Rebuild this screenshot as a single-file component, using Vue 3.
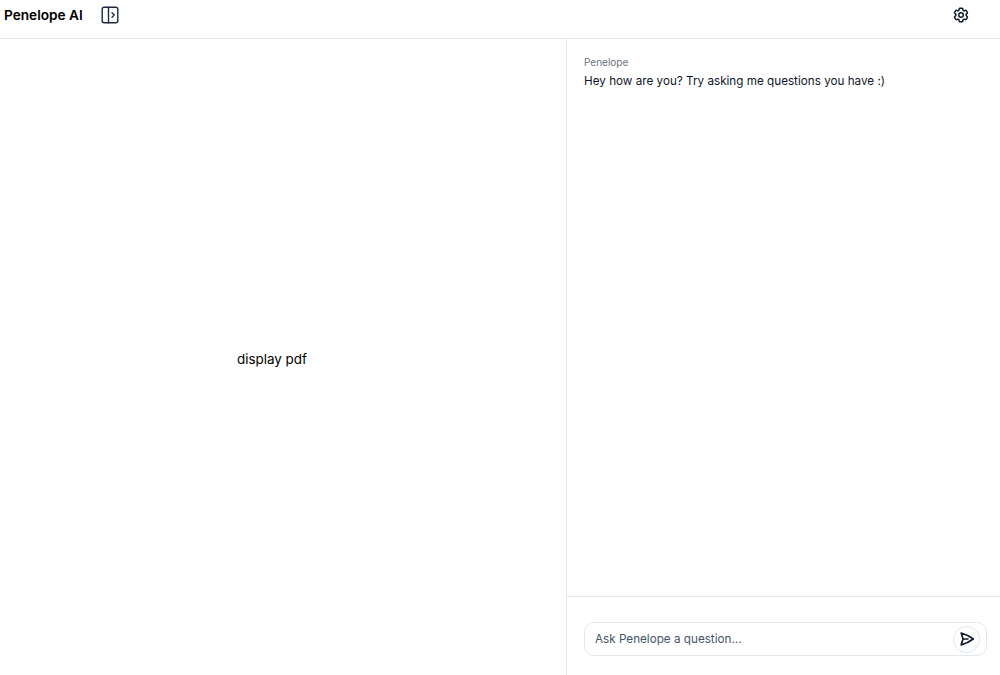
<template>
  <div class="page">
    <header class="topbar">
      <div class="brand">
        <span class="title">Penelope AI</span>
        <button class="icon-btn panel-btn">
          <svg width="20" height="20" viewBox="0 0 20 20" fill="none" stroke="#1e293b" stroke-width="1.4" stroke-linecap="round" stroke-linejoin="round">
            <rect x="2.2" y="2.2" width="15.6" height="15.6" rx="2" />
            <path d="M8.5 2.2v15.6" />
            <path d="M12 7.8 14.2 10 12 12.2" />
          </svg>
        </button>
      </div>
      <button class="icon-btn gear-btn">
        <svg width="18" height="18" viewBox="0 0 24 24" fill="none" stroke="#0f172a" stroke-width="2" stroke-linecap="round" stroke-linejoin="round">
          <path d="M9.594 3.94c.09-.542.56-.94 1.11-.94h2.593c.55 0 1.02.398 1.11.94l.213 1.281c.063.374.313.686.645.87.074.04.147.083.22.127.325.196.72.257 1.075.124l1.217-.456a1.125 1.125 0 0 1 1.37.49l1.296 2.247a1.125 1.125 0 0 1-.26 1.431l-1.003.827c-.293.241-.438.613-.43.992a7.723 7.723 0 0 1 0 .255c-.008.378.137.75.43.991l1.004.827c.424.35.534.955.26 1.43l-1.298 2.247a1.125 1.125 0 0 1-1.369.491l-1.217-.456c-.355-.133-.75-.072-1.076.124a6.47 6.47 0 0 1-.22.128c-.331.183-.581.495-.644.869l-.213 1.281c-.09.543-.56.94-1.11.94h-2.594c-.55 0-1.019-.398-1.11-.94l-.213-1.281c-.062-.374-.312-.686-.644-.87a6.52 6.52 0 0 1-.22-.127c-.325-.196-.72-.257-1.076-.124l-1.217.456a1.125 1.125 0 0 1-1.369-.49l-1.297-2.247a1.125 1.125 0 0 1 .26-1.431l1.004-.827c.292-.24.437-.613.43-.991a6.932 6.932 0 0 1 0-.255c.007-.38-.138-.751-.43-.992l-1.004-.827a1.125 1.125 0 0 1-.26-1.43l1.297-2.247a1.125 1.125 0 0 1 1.37-.491l1.216.456c.356.133.751.072 1.076-.124.072-.044.146-.086.22-.128.332-.183.582-.495.644-.869l.214-1.28Z" />
          <circle cx="12" cy="12" r="3" />
        </svg>
      </button>
    </header>
    <main class="content">
      <section class="pdf-pane">display pdf</section>
      <section class="chat-pane">
        <div class="messages">
          <div class="sender">Penelope</div>
          <div class="message">{{ greeting }}</div>
        </div>
        <div class="composer">
          <div class="input-box">
            <span class="placeholder">Ask Penelope a question...</span>
            <button class="send-btn">
              <svg width="16" height="16" viewBox="0 0 24 24" fill="none" stroke="#0f172a" stroke-width="2.4" stroke-linecap="round" stroke-linejoin="round">
                <path d="M6 12 3.269 3.125A59.769 59.769 0 0 1 21.485 12 59.768 59.768 0 0 1 3.27 20.875L5.999 12Zm0 0h7.5" />
              </svg>
            </button>
          </div>
        </div>
      </section>
    </main>
  </div>
</template>

<script setup>
const greeting = 'Hey how are you? Try asking me questions you have :)'
</script>

<style>
body {
  margin: 0;
  background: #fff;
}
</style>

<style scoped>
.page {
  width: 1000px;
  height: 675px;
  display: flex;
  flex-direction: column;
  font-family: Inter, "Liberation Sans", sans-serif;
  color: #0f172a;
  overflow: hidden;
}
.topbar {
  height: 30px;
  flex: none;
  display: flex;
  align-items: center;
  justify-content: space-between;
  border-bottom: 1px solid #e2e8f0;
  padding: 0 30.5px 8px 4px;
}
.brand {
  display: flex;
  align-items: center;
  gap: 17px;
}
.title {
  font-size: 13.65px;
  font-weight: 600;
  color: #000;
}
.icon-btn {
  border: 0;
  background: none;
  padding: 0;
  display: flex;
}
.content {
  flex: 1;
  display: flex;
  min-height: 0;
}
.pdf-pane {
  width: 566px;
  flex: none;
  display: flex;
  align-items: center;
  justify-content: center;
  font-size: 13.4px;
  color: #000;
  padding-top: 4px;
  padding-right: 22px;
  box-sizing: border-box;
}
.chat-pane {
  flex: 1;
  display: flex;
  flex-direction: column;
  border-left: 1px solid #e2e8f0;
  min-width: 0;
}
.messages {
  flex: 1;
  padding: 15px 17px;
}
.sender {
  font-size: 10px;
  line-height: 16px;
  color: #6b7280;
}
.message {
  font-size: 11.7px;
  line-height: 20px;
  margin-top: 1px;
  color: #0f172a;
}
.composer {
  height: 79px;
  flex: none;
  border-top: 1px solid #e2e8f0;
  padding: 25px 13px 0 17px;
  box-sizing: border-box;
}
.input-box {
  height: 34px;
  box-sizing: border-box;
  display: flex;
  align-items: center;
  justify-content: space-between;
  border: 1px solid #e2e8f0;
  border-radius: 10px;
  padding: 0 6px 0 10px;
}
.placeholder {
  font-size: 11.7px;
  color: #475569;
}
.send-btn {
  width: 27px;
  height: 27px;
  border: 1px solid #e2e8f0;
  border-radius: 50%;
  background: #fff;
  padding: 0;
  display: flex;
  align-items: center;
  justify-content: center;
}
</style>
